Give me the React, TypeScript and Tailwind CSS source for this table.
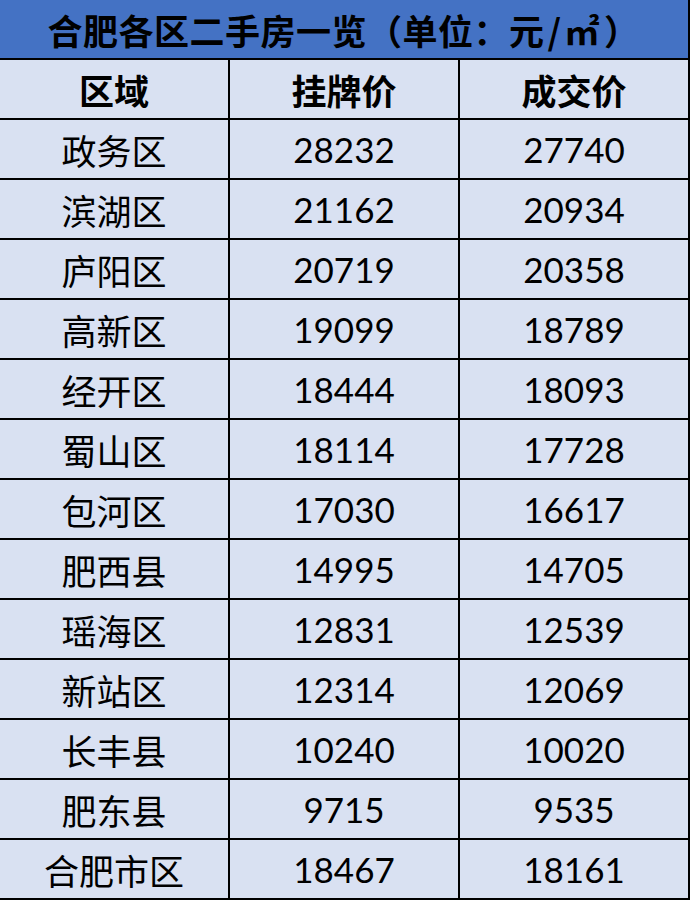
import React from "react";

interface Row {
  area: string;
  listing: string;
  deal: string;
}

const rows: Row[] = [
  { area: "政务区", listing: "28232", deal: "27740" },
  { area: "滨湖区", listing: "21162", deal: "20934" },
  { area: "庐阳区", listing: "20719", deal: "20358" },
  { area: "高新区", listing: "19099", deal: "18789" },
  { area: "经开区", listing: "18444", deal: "18093" },
  { area: "蜀山区", listing: "18114", deal: "17728" },
  { area: "包河区", listing: "17030", deal: "16617" },
  { area: "肥西县", listing: "14995", deal: "14705" },
  { area: "瑶海区", listing: "12831", deal: "12539" },
  { area: "新站区", listing: "12314", deal: "12069" },
  { area: "长丰县", listing: "10240", deal: "10020" },
  { area: "肥东县", listing: "9715", deal: "9535" },
  { area: "合肥市区", listing: "18467", deal: "18161" },
];

const cjk = "font-['Noto_Sans_CJK_SC',sans-serif]";
const num = "font-['Lato','Noto_Sans_CJK_SC',sans-serif] font-normal";

function Cell({ children, className = "" }: { children: React.ReactNode; className?: string }) {
  return (
    <div className={`w-[230px] h-full flex items-center justify-center border-r-2 border-black ${className}`}>
      {children}
    </div>
  );
}

export default function App() {
  return (
    <div className="w-[690px] h-[900px] bg-[#d9e1f2] text-black overflow-hidden">
      {/* Title */}
      <div className={`h-[60px] flex items-center justify-center bg-[#4472c4] border-b-2 border-r-2 border-black ${cjk} text-[35px] font-semibold leading-none tracking-[0.5px] pr-[1px]`}>
        <span>合肥各区二手房一览（单位：元</span>
        <span className="px-[3px]">/</span>
        <span className="pr-[4px]">㎡</span>
        <span>）</span>
      </div>

      {/* Header */}
      <div className={`h-[60px] flex border-b-2 border-black ${cjk} text-[35px] font-semibold leading-none`}>
        <Cell>区域</Cell>
        <Cell>挂牌价</Cell>
        <Cell>成交价</Cell>
      </div>

      {rows.map((r) => (
        <div key={r.area} className="h-[60px] flex border-b-2 border-black leading-none">
          <Cell className={`${cjk} text-[35px]`}>{r.area}</Cell>
          <Cell className={`${num} text-[35px]`}>{r.listing}</Cell>
          <Cell className={`${num} text-[35px]`}>{r.deal}</Cell>
        </div>
      ))}
    </div>
  );
}
